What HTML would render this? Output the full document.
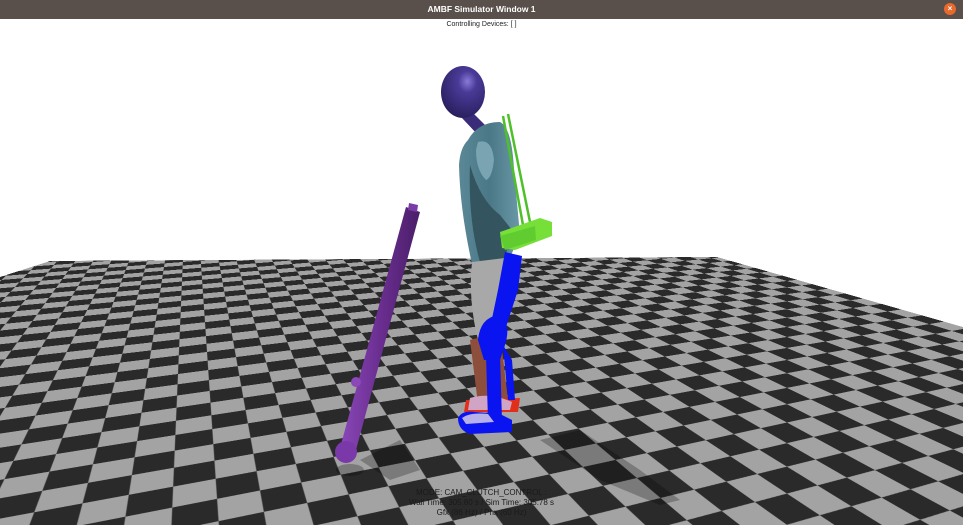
<!DOCTYPE html>
<html><head><meta charset="utf-8"><style>
html,body{margin:0;padding:0;width:963px;height:525px;overflow:hidden;background:#fff;font-family:"Liberation Sans",sans-serif}
#tb{position:absolute;left:0;top:0;width:963px;height:19px;background:#59504b;color:#fff;font-size:8.5px;font-weight:bold;text-align:center;line-height:18px}
#cl{position:absolute;left:944px;top:3px;width:12px;height:12px;border-radius:50%;background:#e9692c;color:#fff;font-size:8px;line-height:12px;text-align:center;font-weight:bold}
#cd{position:absolute;left:0;top:19px;width:963px;text-align:center;font-size:7px;color:#222;line-height:11px}
.scene{position:absolute;left:0;top:19px;width:963px;height:506px;perspective:700px;perspective-origin:481px 253px;overflow:hidden}
.floor{position:absolute;left:-1519px;top:-1419px;width:4000px;height:2100px;transform-origin:2000px 2100px;transform:rotateX(76.2deg);
clip-path:polygon(394px 133px,2902px 65px,3792px 2100px,192px 2100px);overflow:hidden}
.tex{position:absolute;left:-1000px;top:-2000px;width:6000px;height:6000px;transform:rotate(-22deg);
background:repeating-conic-gradient(#a3a3a3 0 25%,#2a2a2a 0 50%) 0 0/124px 124px}
svg{position:absolute;left:0;top:0}
#bt{position:absolute;left:0;top:488px;width:963px;text-align:center;font-size:8px;color:#1a1a1a;line-height:10px}
</style></head><body>
<div class="scene"><div class="floor"><div class="tex"></div></div></div>
<svg width="963" height="525" viewBox="0 0 963 525">
<defs>
<radialGradient id="hd" cx="0.6" cy="0.3" r="0.7"><stop offset="0" stop-color="#8a7ad8"/><stop offset="0.3" stop-color="#4a3a98"/><stop offset="1" stop-color="#2a2060"/></radialGradient>
<linearGradient id="cr" x1="0" y1="0" x2="1" y2="0"><stop offset="0" stop-color="#8a48b8"/><stop offset="0.5" stop-color="#6a2e90"/><stop offset="1" stop-color="#4a1e68"/></linearGradient>
<linearGradient id="ts" x1="0" y1="0" x2="1" y2="0"><stop offset="0" stop-color="#5a8896"/><stop offset="0.5" stop-color="#4a7887"/><stop offset="1" stop-color="#6a98a6"/></linearGradient>
</defs>
<g fill="#000" opacity="0.25">
<path d="M360,460 L400,440 L420,470 L390,480 Z"/>
<path d="M540,440 L580,430 L640,470 L680,500 L660,505 L600,480 Z"/>
<ellipse cx="350" cy="470" rx="14" ry="6"/>
</g>
<path d="M406,207 L420,212 L356,450 L340,448 Z" fill="url(#cr)"/>
<path d="M409,203 L418,205 L417,212 L408,210 Z" fill="#7a3aa8"/>
<circle cx="346" cy="452" r="11" fill="#7a38a8"/>
<circle cx="356" cy="382" r="5" fill="#8a48b8"/>
<path d="M470,110 L488,128 L478,135 L462,118 Z" fill="#3a2c78"/>
<ellipse cx="463" cy="92" rx="22" ry="26" fill="url(#hd)"/>
<path d="M468,140 Q478,122 500,122 Q512,128 514,170 L520,235 L508,262 L472,264 Q460,210 459,165 Q460,148 468,140 Z" fill="url(#ts)"/>
<path d="M470,165 Q480,200 500,215 L512,230 L505,258 L480,262 Q468,220 470,165 Z" fill="#34555f"/>
<path d="M478,142 Q492,138 494,160 Q492,178 486,180 Q476,170 476,150 Z" fill="#7aa4b2"/>
<line x1="503" y1="116" x2="523" y2="225" stroke="#4ec02a" stroke-width="2.5"/>
<line x1="508" y1="114" x2="530" y2="222" stroke="#4ec02a" stroke-width="2.5"/>
<path d="M500,232 L540,218 L552,222 L552,236 L515,250 L502,248 Z" fill="#76e038"/>
<path d="M500,236 L535,226 L536,240 L505,250 Z" fill="#60cc30"/>
<path d="M472,262 L505,258 L503,330 L478,340 Q468,300 472,262 Z" fill="#a8a8a8"/>
<path d="M470,340 L500,332 L508,400 L478,404 Z" fill="#8e4e3c"/>
<path d="M466,400 L520,398 L518,412 L464,412 Z" fill="#e0301c"/>
<path d="M470,398 Q490,392 512,402 L510,410 L468,410 Z" fill="#d0a4c4"/>
<g fill="#0a14f0">
<path d="M505,252 L522,256 L518,290 L505,330 L490,328 L498,290 Z"/>
<path d="M478,340 Q480,318 498,315 Q512,322 505,345 L500,360 L484,360 Z"/>
<path d="M486,355 L500,355 L502,420 L492,428 L488,420 Z"/>
<path d="M503,345 L512,360 L515,400 L508,400 Z"/>
<path d="M458,418 Q462,410 475,412 L500,414 L512,420 L512,432 L470,434 Q458,430 458,418 Z"/>
</g>
<path d="M462,418 Q470,412 488,414 L494,422 L466,424 Z" fill="#b8b0e8"/>
</svg>
<div id="tb">AMBF Simulator Window 1</div>
<div id="cl">×</div>
<div id="cd">Controlling Devices: [ ]</div>
<div id="bt">MODE: CAM_CLUTCH_CONTROL :<br>Wall Time: 305.80 s / Sim Time: 305.78 s<br>Gfx (86 Hz) / Phx (60 Hz)</div>
</body></html>
